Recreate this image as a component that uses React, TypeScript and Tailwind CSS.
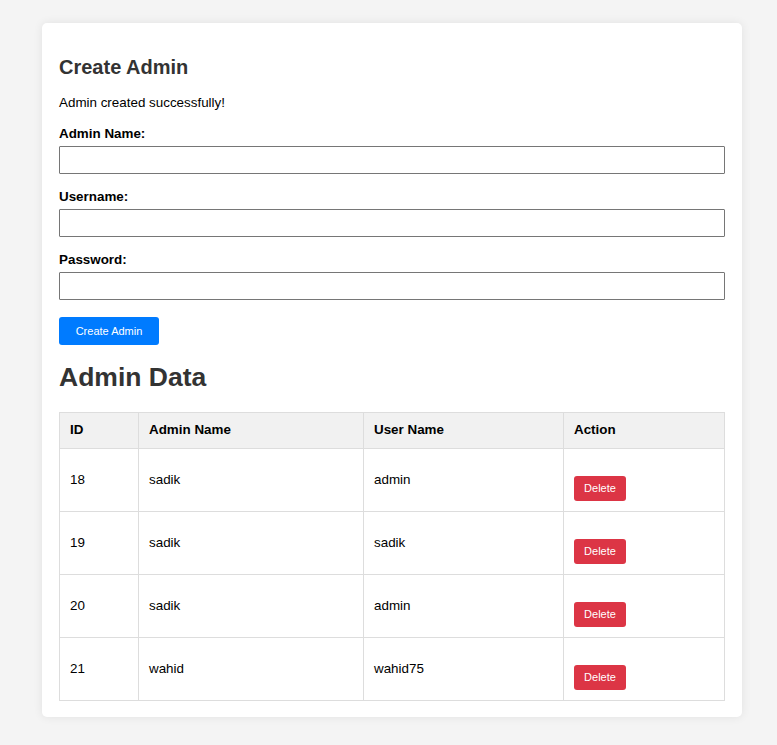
import React from "react";

const rows = [
  { id: 18, name: "sadik", user: "admin" },
  { id: 19, name: "sadik", user: "sadik" },
  { id: 20, name: "sadik", user: "admin" },
  { id: 21, name: "wahid", user: "wahid75" },
];

function Field({ label }: { label: string }) {
  return (
    <div className="mb-[15px]">
      <label className="block h-[16px] leading-[16px] mb-[4px] text-[13.4px] font-bold text-black">{label}</label>
      <input
        type="text"
        className="block w-full h-[28px] border border-[#767676] bg-white rounded-[1px] outline-none"
      />
    </div>
  );
}

export default function App() {
  return (
    <div
      className="min-h-[745px] bg-[#f4f4f4] pt-[23px] pb-[28px] pl-[42px]"
      style={{ fontFamily: '"Liberation Sans", Arial, sans-serif' }}
    >
      <div className="w-[700px] bg-white rounded-[5px] shadow-[0_0_10px_rgba(0,0,0,0.08)] px-[17px] pt-[17px] pb-[16px]">
        <h2 className="mt-[16px] text-[20px] leading-[23px] font-bold text-[#333]">Create Admin</h2>
        <p className="mt-[16px] text-[13.4px] leading-[16px] text-black">Admin created successfully!</p>
        <div className="mt-[15px]">
          <Field label="Admin Name:" />
          <Field label="Username:" />
          <Field label="Password:" />
        </div>
        <button className="mt-[2px] w-[100px] h-[28px] bg-[#007bff] text-white text-[11px] rounded-[3px]">
          Create Admin
        </button>
        <h1 className="mt-[17px] text-[26.5px] leading-[31px] font-bold text-[#333]">Admin Data</h1>
        <table className="mt-[19px] w-full border-collapse text-[13.4px] text-black">
          <thead>
            <tr className="h-[36px] bg-[#f1f1f1]">
              <th className="w-[79px] border border-[#dddddd] px-[10px] text-left font-bold">ID</th>
              <th className="w-[225px] border border-[#dddddd] px-[10px] text-left font-bold">Admin Name</th>
              <th className="w-[200px] border border-[#dddddd] px-[10px] text-left font-bold">User Name</th>
              <th className="border border-[#dddddd] px-[10px] text-left font-bold">Action</th>
            </tr>
          </thead>
          <tbody>
            {rows.map((r) => (
              <tr key={r.id} className="h-[63px]">
                <td className="border border-[#dddddd] px-[10px] align-middle">{r.id}</td>
                <td className="border border-[#dddddd] px-[10px] align-middle">{r.name}</td>
                <td className="border border-[#dddddd] px-[10px] align-middle">{r.user}</td>
                <td className="border border-[#dddddd] px-[10px] align-middle">
                  <button className="block mt-[16px] w-[52px] h-[25px] bg-[#dc3545] text-white text-[11px] rounded-[3px]">
                    Delete
                  </button>
                </td>
              </tr>
            ))}
          </tbody>
        </table>
      </div>
    </div>
  );
}
